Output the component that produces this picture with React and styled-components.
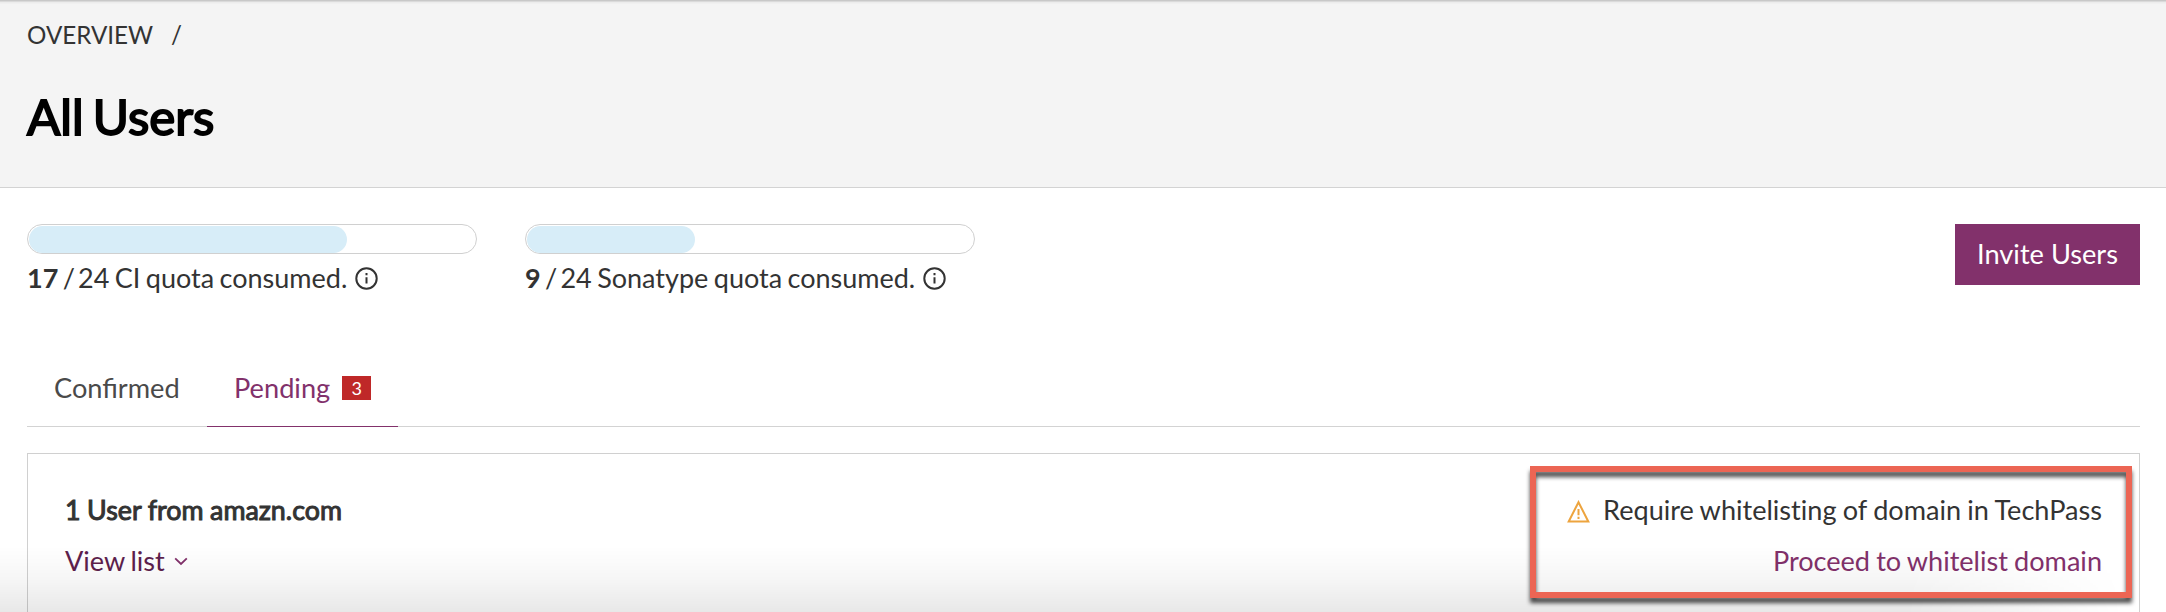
import React from 'react';
import styled, { createGlobalStyle } from 'styled-components';

const Global = createGlobalStyle`
  *, *::before, *::after { box-sizing: border-box; }
  body { margin: 0; background: #fff; font-family: Lato, "Liberation Sans", sans-serif; font-size: 27px; line-height: 32px; color: #333; overflow: hidden; }
  #root { height: 612px; overflow: hidden; }
`;

const Page = styled.div`
  position: relative;
  height: 612px;
  overflow: hidden;
`;

const Header = styled.header`
  height: 188px;
  padding: 21px 27px 0;
  background: linear-gradient(to bottom, #c8c8c8 0 1px, #dadada 1px 2px, #ececec 2px 3px, #f4f4f4 4px);
  border-bottom: 1px solid #d3d3d3;
`;

const Breadcrumb = styled.nav`
  display: flex;
  gap: 18px;
  font-size: 24.2px;
  line-height: 28px;
`;

const Title = styled.h1`
  margin: 37px 0 0;
  font-size: 49.3px;
  line-height: 60px;
  font-weight: 400;
  word-spacing: -3.3px;
  color: #000;
  -webkit-text-stroke: 1.9px #000;
`;

const Summary = styled.section`
  display: flex;
  gap: 48px;
  height: 138px;
  padding: 36px 26px 0 27px;
`;

const Quota = styled.div`
  width: 450px;
`;

const Track = styled.div`
  height: 30px;
  padding: 1px;
  border: 1px solid #d0d0d0;
  border-radius: 15px;
`;

const Fill = styled.div`
  width: ${(p) => p.$percent}%;
  height: 27px;
  border-radius: 14px;
  background: #d7edf8;
`;

const QuotaLabel = styled.div`
  display: flex;
  align-items: center;
  gap: 8px;
  margin-top: 8px;
  word-spacing: -1.5px;
  white-space: nowrap;
`;

const Slash = styled.span`
  margin: 0 -2.3px 0 -1px;
`;

const InviteButton = styled.button`
  width: 185px;
  height: 61px;
  margin-left: auto;
  padding: 0 0 2px;
  border: 0;
  background: #82316b;
  color: #fff;
  font: inherit;
  font-size: 27.2px;
`;

const Tabs = styled.div`
  display: flex;
  height: 101px;
  margin: 0 26px 0 27px;
  border-bottom: 1px solid #d3d3d3;
`;

const Tab = styled.div`
  display: flex;
  gap: 12px;
  width: ${(p) => (p.$active ? 191 : 180)}px;
  height: 101px;
  padding: 46px 0 0 27px;
  font-size: 27.2px;
  color: ${(p) => (p.$active ? '#82316b' : '#4a4a4a')};
  border-bottom: 1px solid ${(p) => (p.$active ? '#82316b' : 'transparent')};
`;

const Badge = styled.span`
  width: 29px;
  height: 24px;
  margin-top: 4px;
  background: #bf2828;
  color: #fff;
  font-size: 18px;
  line-height: 24px;
  text-align: center;
`;

const Card = styled.section`
  display: flex;
  justify-content: space-between;
  height: 190px;
  margin: 26px 26px 0 27px;
  padding: 40px 37px 0;
  border: 1px solid #d0d0d0;
`;

const Column = styled.div`
  display: flex;
  flex-direction: column;
  gap: 19px;
  align-items: ${(p) => (p.$end ? 'flex-end' : 'flex-start')};
  font-size: 27.1px;
  font-variant-ligatures: none;
  word-spacing: -1px;
`;

const Domain = styled.div`
  font-size: 26.8px;
  word-spacing: -0.3px;
  -webkit-text-stroke: 1px #333;
`;

const Link = styled.a`
  display: flex;
  align-items: center;
  gap: 9px;
  color: ${(p) => (p.$dark ? '#5e1f4d' : '#82316b')};
  word-spacing: ${(p) => (p.$dark ? -1.2 : -0.8)}px;
`;

const Notice = styled.div`
  display: flex;
  align-items: center;
  gap: 13px;
  word-spacing: -0.65px;

  svg {
    margin-top: 3px;
  }
`;

const BottomFade = styled.div`
  position: absolute;
  left: 0;
  right: 0;
  bottom: 0;
  height: 66px;
  background: linear-gradient(to bottom, transparent, rgba(0, 0, 0, 0.035) 50%, rgba(0, 0, 0, 0.09));
  mask-image: linear-gradient(to right, #000 88%, transparent 98%);
  pointer-events: none;
`;

const Highlight = styled.div`
  position: absolute;
  left: 1530px;
  top: 466px;
  width: 602px;
  height: 132px;
  border: 6px solid #ec6554;
  filter: drop-shadow(0 5px 2px rgba(0, 0, 0, 0.7));
  pointer-events: none;
`;

const InfoIcon = () => (
  <svg width="23" height="23" viewBox="0 0 23 23" fill="none" stroke="#333" strokeWidth="2">
    <circle cx="11.5" cy="11.5" r="10.2" />
    <path d="M11.5 10.3v6.2M11.5 6v2.2" />
  </svg>
);

const WarningIcon = () => (
  <svg width="23" height="23" viewBox="0 0 23 23" fill="none" stroke="#eda43e" strokeWidth="2">
    <path d="M11.5 2.2 1.7 21.5h19.6Z" />
    <path d="M11.5 9v6.2M11.5 16.8v2.2" />
  </svg>
);

const Chevron = () => (
  <svg width="14" height="9" viewBox="0 0 14 9" fill="none" stroke="#82316b" strokeWidth="1.8">
    <path d="M1.2 1.3 7 7l5.8-5.7" />
  </svg>
);

const quotas = [
  { used: 17, name: 'CI', percent: 71.3 },
  { used: 9, name: 'Sonatype', percent: 37.7 },
];

export default function App() {
  return (
    <Page>
      <Global />
      <Header>
        <Breadcrumb>
          <span>OVERVIEW</span>
          <span>/</span>
        </Breadcrumb>
        <Title>All Users</Title>
      </Header>
      <Summary>
        {quotas.map((q) => (
          <Quota key={q.name}>
            <Track><Fill $percent={q.percent} /></Track>
            <QuotaLabel>
              <span><b>{q.used}</b> <Slash>/</Slash> 24 {q.name} quota consumed.</span>
              <InfoIcon />
            </QuotaLabel>
          </Quota>
        ))}
        <InviteButton>Invite Users</InviteButton>
      </Summary>
      <Tabs>
        <Tab>Confirmed</Tab>
        <Tab $active>Pending<Badge>3</Badge></Tab>
      </Tabs>
      <Card>
        <Column>
          <Domain>1 User from amazn.com</Domain>
          <Link $dark>View list<Chevron /></Link>
        </Column>
        <Column $end>
          <Notice><WarningIcon />Require whitelisting of domain in TechPass</Notice>
          <Link>Proceed to whitelist domain</Link>
        </Column>
      </Card>
      <BottomFade />
      <Highlight />
    </Page>
  );
}
